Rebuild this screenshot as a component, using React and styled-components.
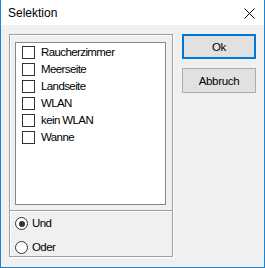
import styled, { createGlobalStyle } from "styled-components";

const Global = createGlobalStyle`
  html, body {
    margin: 0;
    padding: 0;
    background: #ffffff;
  }
  body {
    font-family: "Liberation Sans", Arial, sans-serif;
  }
`;

const options = ["Raucherzimmer", "Meerseite", "Landseite", "WLAN", "kein WLAN", "Wanne"];

const App = () => {
  return (
    <>
      <Global />
      <Window>
        <TitleBar>
          <Title>Selektion</Title>
          <Close>
            <svg width="11" height="11" viewBox="0 0 11 11">
              <path d="M0.5 0.5 L10.5 10.5 M10.5 0.5 L0.5 10.5" stroke="#000" strokeWidth="1" />
            </svg>
          </Close>
        </TitleBar>
        <Body>
          <GroupBox>
            <ListBox>
              {options.map((o) => (
                <Item key={o}>
                  <CheckBox />
                  <Label>{o}</Label>
                </Item>
              ))}
            </ListBox>
            <Separator />
            <Radios>
              <RadioRow>
                <Radio $checked />
                <Label>Und</Label>
              </RadioRow>
              <RadioRow>
                <Radio />
                <Label>Oder</Label>
              </RadioRow>
            </Radios>
          </GroupBox>
          <Buttons>
            <Button $default>Ok</Button>
            <Button>Abbruch</Button>
          </Buttons>
        </Body>
      </Window>
    </>
  );
};

export default App;

const Window = styled.div`
  width: 265px;
  height: 268px;
  box-sizing: border-box;
  border: 1px solid #1883d7;
  border-top: none;
  display: flex;
  flex-direction: column;
`;
const TitleBar = styled.div`
  height: 25px;
  flex: none;
  background: #ffffff;
  display: flex;
  align-items: center;
  justify-content: space-between;
  padding: 0 9px 0 7px;
`;
const Title = styled.div`
  font-size: 12px;
  color: #000;
  padding-top: 1px;
`;
const Close = styled.div`
  width: 11px;
  height: 11px;
  display: flex;
  margin-top: 1px;
`;
const Body = styled.div`
  flex: 1;
  background: #f0f0f0;
  display: flex;
  align-items: flex-start;
  gap: 9px;
  padding: 9px 8px 10px 8px;
`;
const GroupBox = styled.div`
  width: 164px;
  height: 223px;
  box-sizing: border-box;
  border: 1px solid #a0a0a0;
  box-shadow: inset 1px 1px 0 #ffffff, 1px 1px 0 #ffffff;
  display: flex;
  flex-direction: column;
`;
const ListBox = styled.div`
  margin: 7px 0 0 5px;
  width: 151px;
  height: 163px;
  box-sizing: border-box;
  border: 1px solid #828790;
  background: #ffffff;
  padding: 3px 0 0 6px;
  display: flex;
  flex-direction: column;
`;
const Item = styled.div`
  height: 17px;
  display: flex;
  align-items: flex-start;
  gap: 6px;
`;
const CheckBox = styled.div`
  width: 13px;
  height: 13px;
  box-sizing: border-box;
  border: 1px solid #333333;
  background: #ffffff;
  flex: none;
`;
const Label = styled.span`
  font-size: 11.5px;
  letter-spacing: -0.6px;
  line-height: 13px;
  color: #000;
`;
const Separator = styled.div`
  margin-top: 5px;
  height: 1px;
  background: #a0a0a0;
  box-shadow: 0 1px 0 #ffffff;
`;
const Radios = styled.div`
  display: flex;
  flex-direction: column;
  gap: 11px;
  padding: 6px 0 0 5px;
`;
const RadioRow = styled.div`
  display: flex;
  align-items: center;
  gap: 4px;
`;
const Radio = styled.div`
  width: 13px;
  height: 13px;
  box-sizing: border-box;
  border-radius: 50%;
  border: 1px solid #333333;
  background: #ffffff;
  position: relative;
  flex: none;
  &::after {
    content: "";
    display: ${(p) => (p.$checked ? "block" : "none")};
    position: absolute;
    left: 2.5px;
    top: 2.5px;
    width: 6px;
    height: 6px;
    border-radius: 50%;
    background: #333333;
  }
`;
const Buttons = styled.div`
  display: flex;
  flex-direction: column;
  gap: 9px;
`;
const Button = styled.div`
  width: 74px;
  height: 25px;
  box-sizing: border-box;
  border: ${(p) => (p.$default ? "2px solid #0078d7" : "1px solid #adadad")};
  background: #e1e1e1;
  display: flex;
  align-items: center;
  justify-content: center;
  font-size: 11.5px;
  letter-spacing: -0.3px;
  color: #000;
`;
